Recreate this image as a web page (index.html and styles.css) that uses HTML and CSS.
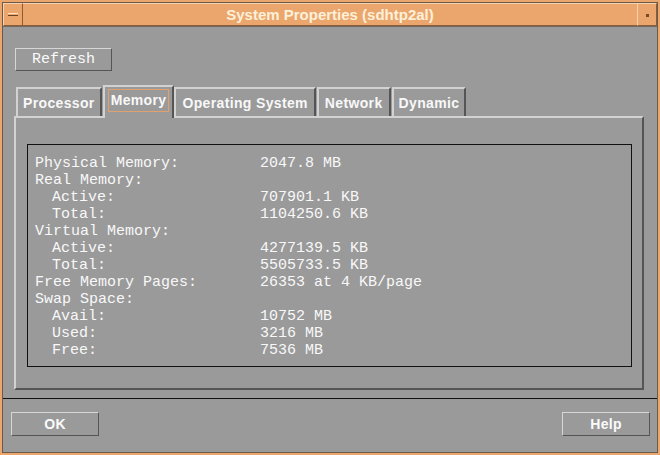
FILE: index.html
```html
<!DOCTYPE html>
<html>
<head>
<meta charset="utf-8">
<title>System Properties</title>
<link rel="stylesheet" href="styles.css">
</head>
<body>
<div class="window">
  <div class="titlebar">
    <div class="tbtn tbtn-menu"><span class="dash"></span></div>
    <div class="title">System Properties (sdhtp2al)</div>
    <div class="tbtn tbtn-max"><span class="dot"></span></div>
  </div>
  <div class="content">
    <div class="toprow"><button class="btn btn-refresh">Refresh</button></div>
    <div class="tabs">
      <div class="tab">Processor</div>
      <div class="tab tab-active"><span class="focus">Memory</span></div>
      <div class="tab tab-wide">Operating System</div>
      <div class="tab tab-wide">Network</div>
      <div class="tab">Dynamic</div>
    </div>
    <div class="panel">
      <div class="infobox">
        <div class="row"><span class="lbl">Physical Memory:</span><span>2047.8 MB</span></div>
        <div class="row"><span class="lbl">Real Memory:</span><span></span></div>
        <div class="row"><span class="lbl sub">Active:</span><span>707901.1 KB</span></div>
        <div class="row"><span class="lbl sub">Total:</span><span>1104250.6 KB</span></div>
        <div class="row"><span class="lbl">Virtual Memory:</span><span></span></div>
        <div class="row"><span class="lbl sub">Active:</span><span>4277139.5 KB</span></div>
        <div class="row"><span class="lbl sub">Total:</span><span>5505733.5 KB</span></div>
        <div class="row"><span class="lbl">Free Memory Pages:</span><span>26353 at 4 KB/page</span></div>
        <div class="row"><span class="lbl">Swap Space:</span><span></span></div>
        <div class="row"><span class="lbl sub">Avail:</span><span>10752 MB</span></div>
        <div class="row"><span class="lbl sub">Used:</span><span>3216 MB</span></div>
        <div class="row"><span class="lbl sub">Free:</span><span>7536 MB</span></div>
      </div>
    </div>
  </div>
  <div class="separator"></div>
  <div class="actions">
    <button class="btn btn-action">OK</button>
    <button class="btn btn-action">Help</button>
  </div>
</div>
</body>
</html>
```
FILE: styles.css
```css
* { box-sizing: border-box; }
html, body { margin: 0; padding: 0; background: #9a9a9a; }
body { width: 660px; height: 455px; overflow: hidden; }

.window {
  width: 660px;
  height: 455px;
  background: #9a9a9a;
  border: 2px solid #eba66e;
  box-shadow: inset 0 0 0 1px #6a5a4a;
  display: flex;
  flex-direction: column;
  padding: 1px;
}

.titlebar {
  height: 24px;
  background: #eba66e;
  display: flex;
  align-items: stretch;
  border-bottom: 1px solid #6f6a64;
}
.tbtn {
  width: 20px;
  border: 1px solid #f8d2ae;
  border-right-color: #8d5c34;
  border-bottom-color: #8d5c34;
  position: relative;
  flex: none;
}
.tbtn-menu .dash {
  position: absolute;
  left: 4px; top: 9px;
  width: 10px; height: 3px;
  background: #eba66e;
  border-top: 1px solid #fbe0c4;
  border-bottom: 1px solid #6a4424;
}
.tbtn-max .dot {
  position: absolute;
  left: 8px; top: 10px;
  width: 3px; height: 3px;
  background: #7a4a26;
}
.title {
  flex: 1;
  text-align: center;
  font-family: "Liberation Sans", Arial, sans-serif;
  font-weight: bold;
  font-size: 15px;
  line-height: 22px;
  color: #fdf0d8;
  border-top: 1px solid #f8d2ae;
  border-bottom: 1px solid #8d5c34;
}

.content {
  padding: 21px 0 0 11px;
}

.toprow { height: 37px; padding-left: 1px; }

.btn {
  background: #9a9a9a;
  border: 1px solid #d6d6d6;
  border-right-color: #555;
  border-bottom-color: #555;
  color: #fafafa;
  padding: 0;
  margin: 0;
  cursor: default;
}
.btn-refresh {
  width: 97px;
  height: 23px;
  font-family: "Liberation Mono", "Courier New", monospace;
  font-size: 15px;
  line-height: 20px;
}

.tabs {
  display: flex;
  align-items: flex-end;
  height: 31px;
  padding-left: 2px;
}
.tab {
  height: 29px;
  border-top: 2px solid #d2d2d2;
  border-left: 2px solid #d2d2d2;
  border-right: 2px solid #555;
  padding: 4px 5px 0 5px;
  font-family: "Liberation Sans", Arial, sans-serif;
  font-weight: bold;
  font-size: 14px;
  letter-spacing: 0.35px;
  color: #f8f8f8;
  line-height: 20px;
  margin-right: 1px;
}
.tab-wide { padding: 4px 6px 0 6px; }
.tab-active {
  padding: 2px 3px 0 3px;
  margin-right: 0;
  position: relative;
  z-index: 1;
  margin-bottom: -2px;
  height: 33px;
  background: #9a9a9a;
}
.focus {
  display: inline-block;
  border: 1px solid #e0a070;
  padding: 0 2px;
  height: 23px;
  line-height: 20px;
}

.panel {
  width: 630px;
  height: 274px;
  border-top: 2px solid #d2d2d2;
  border-left: 2px solid #d2d2d2;
  border-right: 2px solid #555;
  border-bottom: 2px solid #555;
  padding: 26px 0 0 11px;
}

.infobox {
  width: 605px;
  height: 223px;
  border: 1px solid #111;
  padding: 10px 0 0 7px;
  font-family: "Liberation Mono", "Courier New", monospace;
  font-size: 15px;
  line-height: 17px;
  color: #f8f8f8;
}
.row {
  display: grid;
  grid-template-columns: 225px auto;
  white-space: pre;
}
.lbl.sub { padding-left: 17px; }

.separator {
  height: 1px;
  background: #111;
  margin-top: 8px;
}

.actions {
  display: flex;
  justify-content: space-between;
  padding: 13px 7px 0 8px;
}
.btn-action {
  width: 88px;
  height: 24px;
  font-family: "Liberation Sans", Arial, sans-serif;
  font-weight: bold;
  font-size: 14px;
  letter-spacing: 0.3px;
}
```
